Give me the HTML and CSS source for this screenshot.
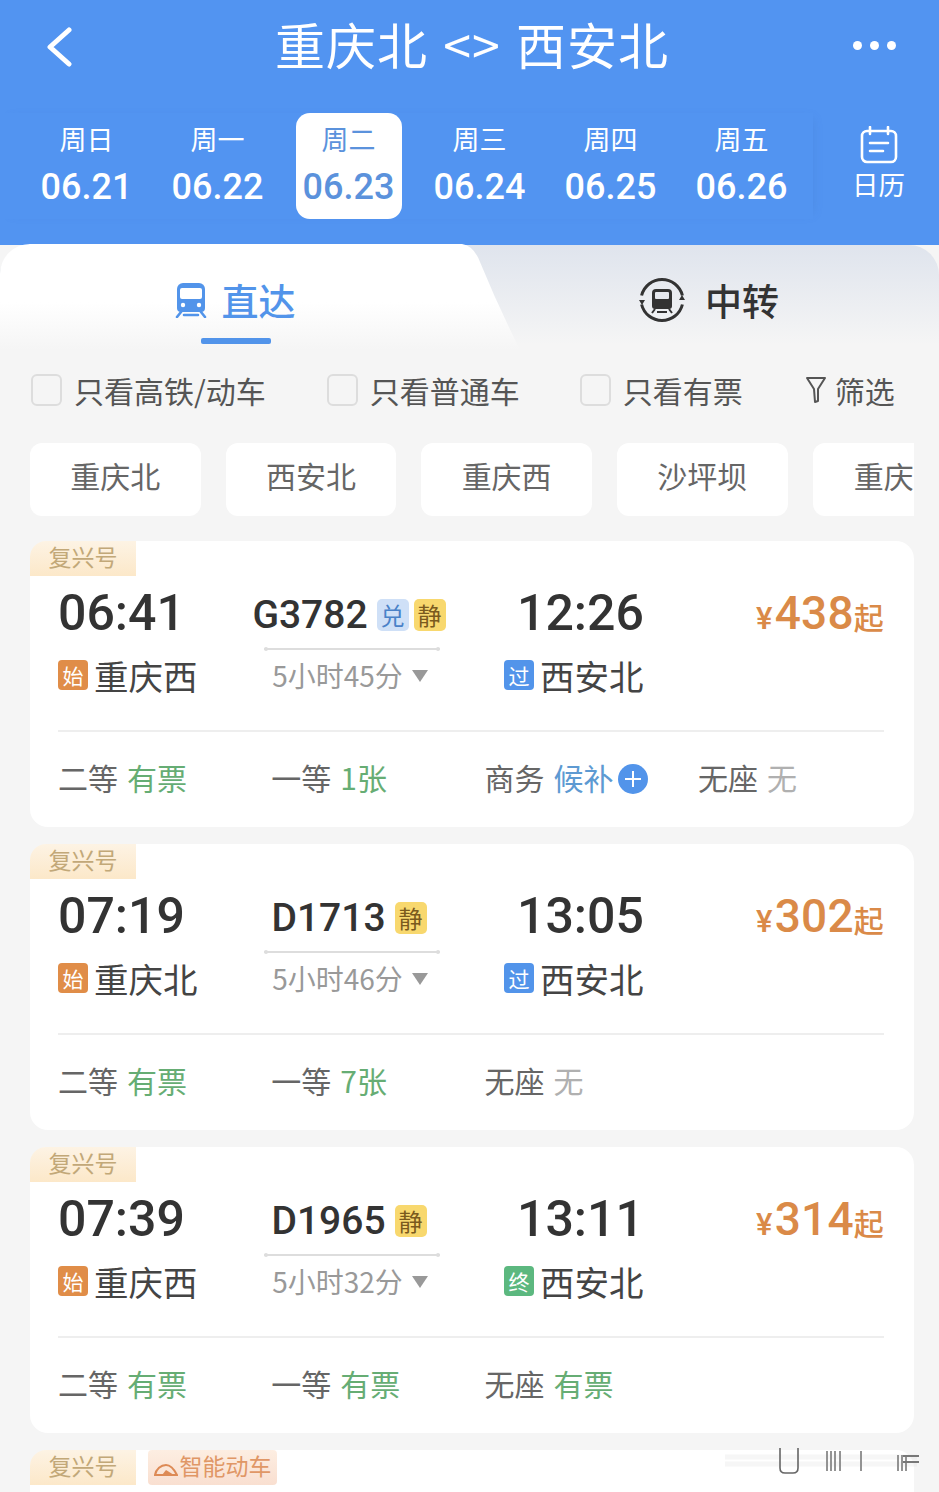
FILE: index.html
```html
<!DOCTYPE html>
<html lang="zh-CN">
<head>
<meta charset="utf-8">
<title>重庆北 &lt;&gt; 西安北</title>
<link rel="stylesheet" href="styles.css">
</head>
<body>
<div class="page">
  <header class="header">
    <div class="titlebar">
      <svg class="back" viewBox="0 0 27 40"><path d="M24 3 L5 20 L24 37" fill="none" stroke="#fff" stroke-width="5" stroke-linecap="round" stroke-linejoin="round"/></svg>
      <h1 class="title">重庆北 &lt;&gt; 西安北</h1>
      <div class="dots"><i></i><i></i><i></i></div>
    </div>
    <div class="dates">
      <div class="strip">
        <div class="day"><span class="wd">周日</span><span class="dt">06.21</span></div>
        <div class="day"><span class="wd">周一</span><span class="dt">06.22</span></div>
        <div class="day active"><span class="wd">周二</span><span class="dt">06.23</span></div>
        <div class="day"><span class="wd">周三</span><span class="dt">06.24</span></div>
        <div class="day"><span class="wd">周四</span><span class="dt">06.25</span></div>
        <div class="day"><span class="wd">周五</span><span class="dt">06.26</span></div>
      </div>
      <div class="cal">
        <svg class="cal-icon" viewBox="0 0 38 38"><rect x="2" y="5" width="34" height="31" rx="5" fill="none" stroke="#fff" stroke-width="2.6"/><path d="M10 1v7M28 1v7M10 17h18M10 25h13" stroke="#fff" stroke-width="2.6" stroke-linecap="round" fill="none"/></svg>
        <span class="cal-text">日历</span>
      </div>
    </div>
  </header>

  <section class="tabs">
    <div class="tab tab-on">
      <svg class="ic-train" viewBox="0 0 32 36"><path fill="#5294ea" d="M8 1h16a6 6 0 0 1 6 6v19a4 4 0 0 1-4 4H6a4 4 0 0 1-4-4V7a6 6 0 0 1 6-6z"/><rect x="5" y="6" width="22" height="11" rx="2" fill="#fff"/><circle cx="8" cy="23" r="2.2" fill="#fff"/><circle cx="24" cy="23" r="2.2" fill="#fff"/><path d="M6 30 2 35M26 30l4 5M9 33h14" stroke="#5294ea" stroke-width="2.6" stroke-linecap="round"/></svg>
      <span>直达</span>
      <b class="tab-bar"></b>
    </div>
    <div class="tab tab-off">
      <svg class="ic-transfer" viewBox="0 0 48 48"><path d="M3.6 19.5A21 21 0 0 1 44.4 19.5M44.4 28.5A21 21 0 0 1 3.6 28.5" fill="none" stroke="#333" stroke-width="3"/><path d="M1 24h6l-3 5zM47 24h-6l3-5z" fill="#333"/><path fill="#333" d="M18 13h12a4 4 0 0 1 4 4v13a3 3 0 0 1-3 3H17a3 3 0 0 1-3-3V17a4 4 0 0 1 4-4z"/><rect x="17" y="16" width="14" height="7" rx="1" fill="#e6e9ef"/><path d="M17 33l-3 4M31 33l3 4M19 36h10" stroke="#333" stroke-width="2"/></svg>
      <span>中转</span>
    </div>
  </section>

  <div class="filters">
    <label class="chk"><i class="box"></i>只看高铁/动车</label>
    <label class="chk"><i class="box"></i>只看普通车</label>
    <label class="chk"><i class="box"></i>只看有票</label>
    <div class="screen">
      <svg class="ic-funnel" viewBox="0 0 22 28"><path d="M2 2h18l-7 11v12l-3 1-1-13z" fill="none" stroke="#555" stroke-width="2" stroke-linejoin="round"/></svg>筛选
    </div>
  </div>

  <div class="stations">
    <div class="chip">重庆北</div>
    <div class="chip">西安北</div>
    <div class="chip">重庆西</div>
    <div class="chip">沙坪坝</div>
    <div class="chip chip-cut">重庆</div>
  </div>

  <article class="card">
    <div class="tags"><span class="tag">复兴号</span></div>
    <div class="main">
      <div class="col"><div class="time">06:41</div><div class="st"><i class="bd orange">始</i>重庆西</div></div>
      <div class="mid">
        <div class="no">G3782<i class="mk blue">兑</i><i class="mk gold">静</i></div>
        <div class="rail"></div>
        <div class="dur">5小时45分<b class="tri"></b></div>
      </div>
      <div class="col arr"><div class="time">12:26</div><div class="st"><i class="bd blue2">过</i>西安北</div></div>
      <div class="price"><small>¥</small>438<em>起</em></div>
    </div>
    <div class="seats">
      <div class="seat">二等<span class="ok">有票</span></div>
      <div class="seat">一等<span class="ok">1张</span></div>
      <div class="seat">商务<span class="wait">候补</span><b class="plus"></b></div>
      <div class="seat">无座<span class="none">无</span></div>
    </div>
  </article>

  <article class="card">
    <div class="tags"><span class="tag">复兴号</span></div>
    <div class="main">
      <div class="col"><div class="time">07:19</div><div class="st"><i class="bd orange">始</i>重庆北</div></div>
      <div class="mid">
        <div class="no">D1713<i class="mk gold">静</i></div>
        <div class="rail"></div>
        <div class="dur">5小时46分<b class="tri"></b></div>
      </div>
      <div class="col arr"><div class="time">13:05</div><div class="st"><i class="bd blue2">过</i>西安北</div></div>
      <div class="price"><small>¥</small>302<em>起</em></div>
    </div>
    <div class="seats">
      <div class="seat">二等<span class="ok">有票</span></div>
      <div class="seat">一等<span class="ok">7张</span></div>
      <div class="seat">无座<span class="none">无</span></div>
    </div>
  </article>

  <article class="card">
    <div class="tags"><span class="tag">复兴号</span></div>
    <div class="main">
      <div class="col"><div class="time">07:39</div><div class="st"><i class="bd orange">始</i>重庆西</div></div>
      <div class="mid">
        <div class="no">D1965<i class="mk gold">静</i></div>
        <div class="rail"></div>
        <div class="dur">5小时32分<b class="tri"></b></div>
      </div>
      <div class="col arr"><div class="time">13:11</div><div class="st"><i class="bd green">终</i>西安北</div></div>
      <div class="price"><small>¥</small>314<em>起</em></div>
    </div>
    <div class="seats">
      <div class="seat">二等<span class="ok">有票</span></div>
      <div class="seat">一等<span class="ok">有票</span></div>
      <div class="seat">无座<span class="ok">有票</span></div>
    </div>
  </article>

  <article class="card">
    <div class="tags">
      <span class="tag">复兴号</span>
      <span class="tag tag2"><svg class="ic-smart" viewBox="0 0 24 16"><path d="M1 14c1-6 6-10 11-10s8 4 11 10z" fill="none" stroke="#dd8a55" stroke-width="2"/><path d="M8 14l4-5 8 5z" fill="#dd8a55"/></svg>智能动车</span>
    </div>
  </article>

  <svg class="smear" viewBox="0 0 210 40" aria-hidden="true">
    <path d="M0 12h192M0 19h192" stroke="#ccc" stroke-width="5" opacity=".16"/>
    <path d="M55 3v20q0 5 5 5h8q5 0 5-5V3" fill="none" stroke="#666" stroke-width="1.6"/>
    <path d="M102 6v20M106 6v20M110 6v20M115 6v20M136 6v20M173 10v16M177 10v16M181 10v16" stroke="#888" stroke-width="1.8"/>
    <path d="M178 11h16M178 17h16" stroke="#777" stroke-width="2"/>
  </svg>
</div>
</body>
</html>
```
FILE: styles.css
```css
* { box-sizing: border-box; }
html, body { margin: 0; padding: 0; }
body {
  background: #f5f5f5;
  font-family: "Noto Sans CJK SC", "Noto Sans", sans-serif;
  color: #333;
}
i, em { font-style: normal; }
.page { position: relative; width: 939px; height: 1492px; overflow: hidden; }

.header { height: 245px; background: #5294f1; color: #fff; }
.titlebar { height: 113px; padding: 0 43px 24px 47px; display: flex; align-items: center; }
.back { width: 27px; height: 40px; flex: none; margin-top: 4px; margin-left: -2px; }
.title { flex: 1; margin: -4px 0 0; padding-left: 19px; text-align: center; font-size: 50px; line-height: 60px; font-weight: 400; letter-spacing: 1px; word-spacing: 3px; white-space: nowrap; }
.dots { display: flex; gap: 8px; flex: none; width: 43px; margin-top: 1px; }
.dots i { width: 9px; height: 9px; border-radius: 50%; background: #fff; }

.dates { display: flex; height: 106px; }
.strip { display: grid; grid-template-columns: repeat(6, 131px); padding-left: 21px; flex: none; width: 813px; box-shadow: 5px 0 10px -7px rgba(60,110,190,.35); }
.day { display: flex; flex-direction: column; align-items: center; padding-top: 7px; border-radius: 14px; }
.day.active { background: #fff; color: #5b92dc; width: 106px; justify-self: center; }
.wd { font-size: 27px; line-height: 38px; }
.dt { font-family: Roboto, sans-serif; font-size: 36px; line-height: 48px; margin-top: 5px; letter-spacing: 0; font-weight: 500; }
.cal { flex: 1; display: flex; flex-direction: column; align-items: center; padding: 13px 0 0 5px; }
.cal-icon { width: 38px; height: 38px; }
.cal-text { font-size: 26.5px; line-height: 36px; margin-top: 2px; }

.tabs {
  position: relative;
  height: 105px;
  display: grid;
  grid-template-columns: 470px 1fr;
  background: linear-gradient(#dfe4ed, #f5f5f5 95%);
  border-radius: 30px 30px 0 0;
}
.tab-on::before {
  content: "";
  position: absolute;
  left: 0; top: -1px;
  width: 520px; height: 106px;
  background: linear-gradient(#fff 55%, #f5f5f5 100%);
  border-radius: 30px 0 0 0;
  clip-path: path("M0 106 L0 30 Q0 0 30 0 L462 0 Q474 2 480 18 Q498 62 520 106 Z");
}
.tab { position: relative; display: flex; align-items: center; justify-content: center; font-size: 37px; padding-top: 5px; }
.tab span { position: relative; }
.tab-on { color: #5294ea; gap: 15px; font-weight: 500; }
.tab-off { color: #333; gap: 19px; font-weight: 500; padding-left: 8px; }
.ic-train { position: relative; width: 32px; height: 36px; }
.ic-transfer { width: 48px; height: 48px; }
.tab-bar { position: absolute; left: 201px; bottom: 6px; width: 70px; height: 6px; border-radius: 2px; background: #5294ea; }

.filters { display: flex; align-items: center; height: 62px; margin-top: 9px; padding-left: 31px; font-size: 30px; color: #555; white-space: nowrap; }
.chk { display: flex; align-items: center; gap: 12px; margin-right: 60px; }
.chk:first-child { margin-right: 61px; }
.chk:nth-child(3) { margin-right: 62px; }
.box { width: 31px; height: 32px; border: 2px solid #ddd; border-radius: 6px; background: #f5f5f5; }
.screen { display: flex; align-items: center; gap: 8px; }
.ic-funnel { width: 22px; height: 28px; }

.stations { display: flex; gap: 25.2px; width: 884px; margin: 22px 0 25px 30px; overflow: hidden; }
.chip { flex: none; width: 170.5px; height: 73px; padding-bottom: 9px; display: flex; align-items: center; justify-content: center; background: #fff; border-radius: 12px; font-size: 30px; line-height: 40px; color: #666; }
.chip-cut { width: 101px; justify-content: flex-start; padding-left: 41px; border-radius: 12px 0 0 12px; }

.card { width: 884px; height: 286px; margin: 0 0 17px 30px; padding: 0 30px 0 28px; background: #fff; border-radius: 18px; }
.tags { display: flex; gap: 12px; margin: 0 -30px 0 -28px; height: 35px; }
.tag { flex: none; width: 106px; height: 35px; padding-bottom: 5px; display: flex; align-items: center; justify-content: center; font-size: 23px; line-height: 28px; color: #c2a878; background: linear-gradient(#fdf3e4, #fce8c9); border-radius: 16px 0 0 0; }
.tag2 { width: 129px; color: #e09766; background: linear-gradient(#fdeee2, #f9dfd0); border-radius: 4px; gap: 2px; }
.ic-smart { width: 24px; height: 16px; margin-top: 8px; }

.main { display: grid; grid-template-columns: 190px 204px 192px 1fr; margin-top: 7px; height: 117px; }
.col { display: flex; flex-direction: column; }
.arr { padding-left: 52px; }
.time { font-family: Roboto, sans-serif; font-size: 50px; line-height: 60px; font-weight: 500; letter-spacing: 0; color: #333; }
.arr .time { margin-left: 13px; }
.st { display: flex; align-items: center; margin-top: 9px; height: 46px; font-size: 34.5px; color: #444; white-space: nowrap; gap: 6px; }
.bd { width: 30px; height: 30px; border-radius: 4px; display: flex; align-items: center; justify-content: center; color: #fff; font-size: 21px; flex: none; }
.orange { background: #e08d48; }
.blue2 { background: #5294ea; }
.green { background: #5cb87f; }

.mid { display: flex; flex-direction: column; align-items: center; }
.no { display: flex; align-items: center; height: 60px; padding-top: 4px; margin-left: -2px; font-family: Roboto, sans-serif; font-size: 39px; letter-spacing: 0; color: #333; font-weight: 500; }
.mk { width: 32px; height: 32px; border-radius: 5px; display: flex; align-items: center; justify-content: center; font-family: "Noto Sans CJK SC", sans-serif; font-size: 24px; line-height: 30px; font-weight: 400; letter-spacing: 0; margin-left: 9px; }
.mk + .mk { margin-left: 5px; }
.blue { background: #cfe0f7; color: #4a82c8; }
.gold { background: #f8d86e; color: #7a5a1e; }
.rail { position: relative; width: 176px; height: 2px; margin: 5px 0 0 3px; background: #ddd; border-radius: 2px; }
.rail::before, .rail::after { content: ""; position: absolute; top: -1px; width: 4px; height: 4px; border-radius: 50%; background: #ddd; }
.rail::before { left: 0; }
.rail::after { right: 0; }
.dur { display: flex; align-items: center; height: 50px; font-size: 28px; color: #999; white-space: nowrap; }
.tri { width: 0; height: 0; margin-left: 9px; margin-top: 2px; border-left: 8.5px solid transparent; border-right: 8.5px solid transparent; border-top: 12px solid #999; }

.price { justify-self: end; font-family: Roboto, sans-serif; font-size: 46px; line-height: 60px; font-weight: 500; color: #da8a48; white-space: nowrap; letter-spacing: .2px; }
.price small { font-size: 31px; margin-right: 2px; }
.price em { font-family: "Noto Sans CJK SC", sans-serif; font-size: 30px; font-weight: 500; }

.seats { display: grid; grid-template-columns: repeat(4, 213.3px); height: 96px; margin-top: 30px; padding-bottom: 5px; border-top: 2px solid #eee; align-items: center; font-size: 30px; color: #666; }
.seat { display: flex; align-items: center; gap: 9px; white-space: nowrap; }
.ok { color: #66ad74; }
.wait { color: #5d9ad2; }
.none { color: #b0b0b0; }
.plus { position: relative; width: 30px; height: 30px; margin: 4px 0 0 -5px; border-radius: 50%; background: #5294ea; }
.plus::before, .plus::after { content: ""; position: absolute; background: #fff; }
.plus::before { left: 7px; right: 7px; top: 14px; height: 2px; }
.plus::after { top: 7px; bottom: 7px; left: 14px; width: 2px; }

.smear { position: absolute; left: 725px; top: 1445px; width: 210px; height: 40px; }
```
